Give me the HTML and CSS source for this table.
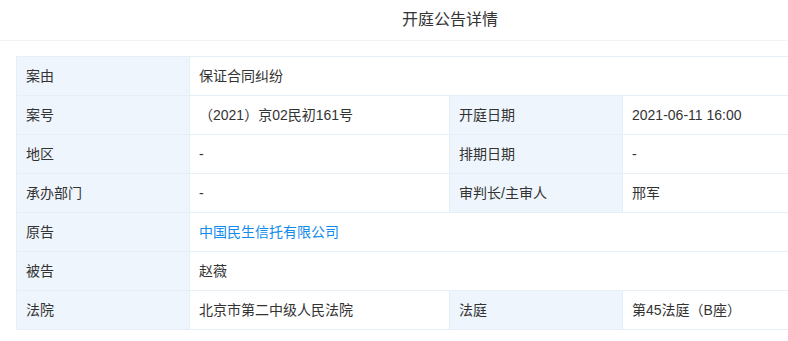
FILE: index.html
```html
<!DOCTYPE html>
<html lang="zh">
<head>
<meta charset="utf-8">
<title>开庭公告详情</title>
<link rel="stylesheet" href="styles.css">
</head>
<body>
<div class="viewport">
<div class="page">
  <div class="header">开庭公告详情</div>
  <div class="body">
    <table class="detail">
      <colgroup>
        <col class="c-label"><col class="c-value"><col class="c-label"><col class="c-value2">
      </colgroup>
      <tr><td class="label">案由</td><td colspan="3">保证合同纠纷</td></tr>
      <tr><td class="label">案号</td><td>（2021）京02民初161号</td><td class="label">开庭日期</td><td>2021-06-11 16:00</td></tr>
      <tr><td class="label">地区</td><td>-</td><td class="label">排期日期</td><td>-</td></tr>
      <tr><td class="label">承办部门</td><td>-</td><td class="label">审判长/主审人</td><td>邢军</td></tr>
      <tr><td class="label">原告</td><td colspan="3"><a class="link" href="#">中国民生信托有限公司</a></td></tr>
      <tr><td class="label">被告</td><td colspan="3">赵薇</td></tr>
      <tr><td class="label">法院</td><td>北京市第二中级人民法院</td><td class="label">法庭</td><td>第45法庭（B座）</td></tr>
    </table>
  </div>
</div>
</div>
</body>
</html>
```
FILE: styles.css
```css
html, body {
  margin: 0;
  padding: 0;
  background: #fff;
}
body {
  font-family: "Liberation Sans", "Noto Sans CJK SC", sans-serif;
  color: #333;
}
.viewport {
  width: 100%;
  height: 341px;
  overflow: hidden;
}
.page {
  width: 900px;
}
.header {
  height: 40px;
  line-height: 40px;
  text-align: center;
  font-size: 16px;
  color: #333;
  border-bottom: 1px solid #f3f3f3;
}
.body {
  padding: 15px 16px 0;
}
.detail {
  width: 868px;
  border-collapse: collapse;
  table-layout: fixed;
  font-size: 14px;
}
.c-label { width: 173px; }
.c-value { width: 260px; }
.c-value2 { width: 262px; }
.detail td {
  height: 38px;
  padding: 0 9px;
  border: 1px solid #e6eef6;
  vertical-align: middle;
  line-height: 20px;
  white-space: nowrap;
}
.detail td.label {
  background: #eef5fc;
}
.link {
  color: #128bed;
  text-decoration: none;
}
```
